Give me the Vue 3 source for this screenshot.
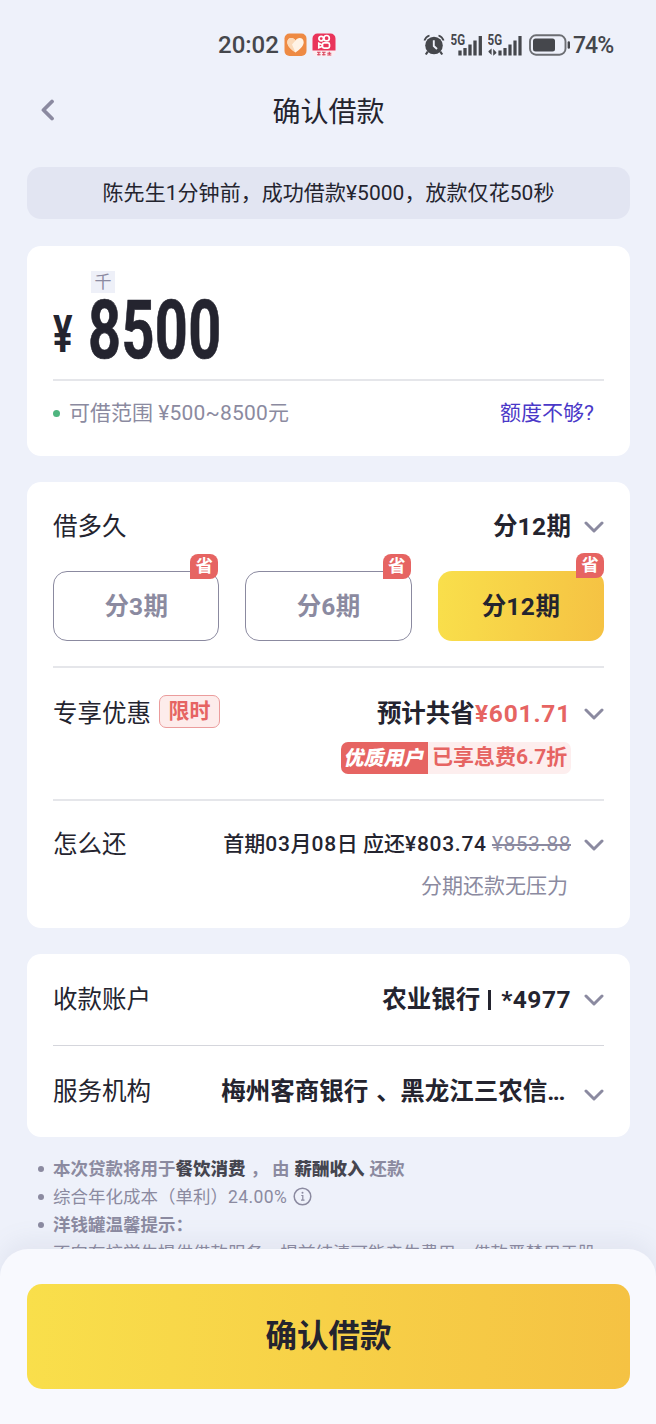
<script setup>
const terms = [
  { n: '3', active: false },
  { n: '6', active: false },
  { n: '12', active: true },
]
</script>

<template>
  <div class="page">
    <div class="status">
      <div class="status-left">
        <span class="clock">20:02</span>
        <svg class="app-ico" width="23" height="24" viewBox="0 0 23 24">
          <rect x="0.5" y="0.5" width="22" height="22.5" rx="5" fill="#ee8a43" />
          <path d="M11.5 19.5C8 17 3.3 13.500 3.300 9.300C3.300 6.500 5.200 5 7.300 5C9.200 5 10.600 6 11.500 7.400C12.400 6 13.800 5 15.700 5C17.800 5 19.700 6.500 19.700 9.300C19.700 13.500 15 17 11.500 19.500Z" fill="#fff3e6" />
          <path d="M11.500 7.400L8 11.500L11.500 19.500C8 17 3.300 13.500 3.300 9.300C3.300 6.500 5.200 5 7.300 5C9.200 5 10.600 6 11.500 7.400Z" fill="#fbd9b8" />
        </svg>
        <svg class="app-ico" width="24" height="24" viewBox="0 0 24 24">
          <rect x="0.500" y="0.500" width="23" height="23" rx="5" fill="#fbeef2" />
          <path d="M5.500 0.500H18.500A5 5 0 0 1 23.500 5.500V17.500H0.500V5.500A5 5 0 0 1 5.500 0.500Z" fill="#e9345a" />
          <g fill="none" stroke="#fff" stroke-width="1.700">
            <circle cx="9.200" cy="5.600" r="2.300" />
            <circle cx="14.600" cy="5.200" r="2.700" />
            <rect x="10.500" y="9.800" width="7" height="5.400" rx="1.600" />
            <path d="M10.500 12L6.800 10.300V14.800L10.500 13.200" />
          </g>
          <path d="M5 19.200h3.600M5 21.800h3.600M6.800 19v3.500M10 19.200h3.600M10 21.800h3.600M11.800 19v3.500M15.300 20.200h4M15.300 22h4M17.300 18.800v3.500" stroke="#d8435a" stroke-width="1.100" />
        </svg>
      </div>
      <div class="status-right">
        <svg width="22" height="22" viewBox="0 0 22 22">
          <circle cx="11" cy="11.500" r="8.800" fill="#45474c" />
          <path d="M1.400 6.500A8 8 0 0 1 6.500 1.500M15.500 1.500A8 8 0 0 1 20.600 6.500" fill="none" stroke="#45474c" stroke-width="1.800" />
          <path d="M4.800 17.500L2.800 20.500M17.200 17.500L19.200 20.500" stroke="#45474c" stroke-width="2.200" />
          <path d="M10.800 6.300V12L14 15" fill="none" stroke="#eef1fa" stroke-width="1.900" />
        </svg>
        <svg class="sig" width="32" height="24" viewBox="0 0 32 24">
          <text class="g5" x="-0.500" y="12" textLength="14.500" lengthAdjust="spacingAndGlyphs">5G</text>
          <path d="M9 17.500V22.500M14 15V22.500M19 11.500V22.500M24 7.500V22.500M29.300 3V22.500" stroke="#45474c" stroke-width="3.300" stroke-linecap="butt" />
        </svg>
        <svg class="sig2" width="34" height="24" viewBox="0 0 34 24">
          <text class="g5" x="-0.500" y="12" textLength="14.500" lengthAdjust="spacingAndGlyphs">5G</text>
          <path d="M12 17.500V22.500M17 15V22.500M22 11.500V22.500M27 7.500V22.500M32 3V22.500" stroke="#45474c" stroke-width="3.200" />
          <path d="M0 18.500H3.600V15.500M8.800 19.700H5.200V22.700M3.600 22V15.800L0.500 19M5.200 16V22.400L8.400 19.200" fill="#45474c" />
        </svg>
        <svg class="bat" width="42" height="22" viewBox="0 0 42 22">
          <rect x="1" y="1.300" width="35.500" height="19.400" rx="6" fill="none" stroke="#6c6e73" stroke-width="1.900" />
          <rect x="4" y="4.500" width="22" height="13" rx="2.500" fill="#45474c" />
          <path d="M39.800 8.500V13.500" stroke="#45474c" stroke-width="2.400" stroke-linecap="round" />
        </svg>
        <span class="pct">74%</span>
      </div>
    </div>

    <header class="nav">
      <svg class="back" width="16" height="22" viewBox="0 0 16 22">
        <path d="M12 2.500L3.500 11L12 19.500" fill="none" stroke="#8b8aa0" stroke-width="3.800" stroke-linejoin="round" stroke-linecap="round" />
      </svg>
      <h1>确认借款</h1>
    </header>

    <div class="notice"><span>陈先生1分钟前，成功借款¥5000，放款仅花50秒</span></div>

    <section class="card amount">
      <div class="unit">千</div>
      <div class="figure">
        <span class="yen"><i>¥</i></span>
        <span class="big"><i>8500</i></span>
      </div>
      <hr />
      <div class="range">
        <span class="dot"></span>
        <span class="range-text">可借范围 <b>¥500~8500</b>元</span>
        <a class="more">额度不够?</a>
      </div>
    </section>

    <section class="card plan">
      <div class="row r-term">
        <span class="label">借多久</span>
        <span class="value">分<b>12</b>期</span>
        <svg class="chev" viewBox="0 0 20 12"><path d="M2 2L10 10L18 2" /></svg>
      </div>
      <div class="terms">
        <div v-for="t in terms" :key="t.n" class="term" :class="{ active: t.active }">
          <span>分<b>{{ t.n }}</b>期</span>
          <em>省</em>
        </div>
      </div>
      <hr />
      <div class="row r-save">
        <span class="label">专享优惠</span>
        <span class="limited">限时</span>
        <span class="value">预计共省<b class="red">¥601.71</b></span>
        <svg class="chev" viewBox="0 0 20 12"><path d="M2 2L10 10L18 2" /></svg>
      </div>
      <div class="vip">
        <span class="vip-tag"><i>优质用户</i></span>
        <span class="vip-text">已享息费6.7折</span>
      </div>
      <hr />
      <div class="row r-repay">
        <span class="label">怎么还</span>
        <span class="value small"><span>首期<b>03</b>月<b>08</b>日 应还<b>¥803.74</b></span> <s>¥853.88</s></span>
        <svg class="chev" viewBox="0 0 20 12"><path d="M2 2L10 10L18 2" /></svg>
      </div>
      <div class="hint">分期还款无压力</div>
    </section>

    <section class="card account">
      <div class="row r-acc">
        <span class="label">收款账户</span>
        <span class="value">农业银行<span class="bar"></span><b>*4977</b></span>
        <svg class="chev" viewBox="0 0 20 12"><path d="M2 2L10 10L18 2" /></svg>
      </div>
      <hr />
      <div class="row r-org">
        <span class="label">服务机构</span>
        <span class="value org">梅州客商银行<span class="sep">、</span>黑龙江三农信<span class="dots">...</span></span>
        <svg class="chev low" viewBox="0 0 20 12"><path d="M2 2L10 10L18 2" /></svg>
      </div>
    </section>

    <ul class="notes">
      <li class="strong">本次贷款将用于<b>餐饮消费</b><span class="comma">，</span><span class="by">由</span><b>薪酬收入</b><span class="ret">还款</span></li>
      <li>综合年化成本（单利）<span class="rate">24.00%</span>
        <svg class="info" width="19" height="19" viewBox="0 0 19 19">
          <circle cx="9.500" cy="9.500" r="8.300" fill="none" stroke="#8b8aa0" stroke-width="1.500" />
          <path d="M8.300 8.500H9.800V13M8 13.200H11.500" fill="none" stroke="#8b8aa0" stroke-width="1.200" />
          <circle cx="9.500" cy="5.700" r="1" fill="#8b8aa0" />
        </svg>
      </li>
      <li class="strong">洋钱罐温馨提示：</li>
      <li class="plain">不向在校学生提供借款服务，提前结清可能产生费用，借款严禁用于股</li>
    </ul>

    <footer class="footer">
      <button class="submit">确认借款</button>
    </footer>
  </div>
</template>

<style>
body {
  margin: 0;
}
</style>

<style scoped>
.page {
  position: relative;
  width: 656px;
  height: 1424px;
  overflow: hidden;
  box-sizing: border-box;
  padding: 0 26px 0 27px;
  background: #eef1fa;
  color: #24242f;
  font-family: Roboto, "Noto Sans CJK SC", sans-serif;
  font-size: 21px;
}
.page * {
  box-sizing: border-box;
}
.status {
  display: flex;
  height: 88px;
  align-items: center;
  padding: 1px 0 0 191px;
}
.status-left {
  display: flex;
  align-items: center;
  width: 205px;
}
.clock {
  width: 66px;
  padding-top: 1px;
  font: 500 24px/30px Roboto, sans-serif;
  color: #45474c;
  white-space: nowrap;
}
.app-ico {
  flex: none;
  margin-right: 5px;
}
.status-right {
  display: flex;
  align-items: center;
  color: #45474c;
}
.g5 {
  font: 700 14px Roboto, sans-serif;
  fill: #45474c;
}
.sig {
  margin-left: 6px;
}
.sig2 {
  margin-left: 5px;
}
.bat {
  margin-left: 7px;
}
.pct {
  margin-left: 2px;
  padding-top: 2px;
  font: 500 23px/30px Roboto, sans-serif;
  letter-spacing: -1px;
}
.nav {
  display: grid;
  grid-template-columns: 40px 1fr 40px;
  align-items: center;
  height: 44px;
}
.back {
  margin-left: 12.500px;
}
.nav h1 {
  margin: 0;
  height: 44px;
  font-size: 28px;
  line-height: 50px;
  font-weight: 400;
  text-align: center;
}
.notice {
  display: flex;
  justify-content: center;
  margin-top: 35px;
  height: 52px;
  line-height: 52px;
  border-radius: 14px;
  background: #e2e5f2;
  font-size: 21px;
  letter-spacing: 0.050px;
  white-space: nowrap;
}
.card {
  border-radius: 14px;
  background: #fff;
  padding: 0 26px;
}
hr {
  margin: 0;
  border: 0;
  height: 2px;
  background: #e5e6ea;
}
.amount {
  margin-top: 27px;
  height: 210px;
  padding-top: 25px;
}
.unit {
  width: 24px;
  height: 22px;
  margin-left: 38px;
  background: #eef0f8;
  color: #8b8aa0;
  font-size: 17px;
  line-height: 22px;
  text-align: center;
}
.figure {
  display: flex;
  height: 86px;
}
.figure i {
  display: block;
  font-style: normal;
  transform-origin: 0 0;
  white-space: nowrap;
}
.yen {
  width: 35px;
}
.yen i {
  font-size: 52px;
  font-weight: 700;
  line-height: 84px;
  transform: scaleX(0.700);
}
.big i {
  font-size: 82px;
  font-weight: 700;
  line-height: 75px;
  letter-spacing: 0.500px;
  transform: scaleX(0.702);
  -webkit-text-stroke: 0.700px #24242f;
}
.range {
  display: flex;
  align-items: center;
  height: 64px;
  color: #8b8aa0;
}
.range b {
  font-weight: 400;
  letter-spacing: 0.200px;
}
.dot {
  width: 7px;
  height: 7px;
  border-radius: 50%;
  background: #4fb57f;
}
.range-text {
  margin-left: 9px;
  padding-bottom: 4px;
}
.more {
  margin-left: auto;
  margin-right: 10px;
  padding-bottom: 4px;
  color: #4a38c8;
}
.plan {
  margin-top: 26px;
  height: 446px;
}
.row {
  display: flex;
  align-items: center;
  white-space: nowrap;
}
.label {
  padding-bottom: 5px;
  font-size: 24.500px;
}
.value {
  margin-left: auto;
  padding-bottom: 5px;
  font-size: 24.500px;
  font-weight: 700;
}
.value b,
.term b {
  font-weight: inherit;
  letter-spacing: 0.500px;
}
.chev {
  flex: none;
  width: 20px;
  height: 12px;
  margin-left: 13px;
}
.chev path {
  fill: none;
  stroke: #8b8aa0;
  stroke-width: 3;
  stroke-linecap: round;
  stroke-linejoin: round;
}
.low {
  margin-top: 5px;
}
.r-term {
  height: 89px;
}
.terms {
  display: grid;
  grid-template-columns: repeat(3, 1fr);
  gap: 26px;
  height: 70px;
  margin-bottom: 25px;
}
.term {
  position: relative;
  display: flex;
  align-items: center;
  justify-content: center;
  height: 70px;
  padding-bottom: 3px;
  border: 1.500px solid #8b8aa0;
  border-radius: 14px;
  color: #8b8aa0;
  font-size: 24.500px;
  font-weight: 700;
}
.active {
  border: 0;
  background: linear-gradient(95deg, #f9df4b, #f5c243);
  color: #24242f;
}
.term em {
  position: absolute;
  right: 0;
  top: -18px;
  width: 28px;
  height: 25px;
  border-radius: 8px 8px 8px 0;
  background: #e66462;
  color: #fff;
  font-size: 17.500px;
  font-style: normal;
  line-height: 25px;
  text-align: center;
}
.r-save {
  height: 74px;
  padding-top: 17px;
}
.limited {
  width: 61px;
  height: 33px;
  margin: 0 0 4px 8px;
  border: 1px solid #eb9c9c;
  border-radius: 7px;
  background: #fdeceb;
  color: #e66462;
  font-size: 21px;
  font-weight: 700;
  line-height: 30px;
  text-align: center;
}
.value .red {
  color: #e66462;
  letter-spacing: 0.800px;
}
.vip {
  display: flex;
  justify-content: flex-end;
  margin-right: 33px;
  height: 57px;
}
.vip span {
  height: 32px;
  white-space: nowrap;
}
.vip-tag {
  width: 87px;
  border-radius: 7px 0 0 7px;
  background: #e66462;
  color: #fff;
  font-size: 20px;
  font-weight: 900;
  line-height: 33px;
  text-align: center;
}
.vip-tag i {
  display: inline-block;
  font-style: normal;
  transform: skewX(-12deg);
}
.vip-text {
  width: 143px;
  padding-left: 4px;
  border-radius: 0 7px 7px 0;
  background: #fdeeee;
  color: #e66462;
  font-weight: 700;
  font-size: 21px;
  line-height: 31px;
}
.r-repay {
  height: 87px;
}
.small {
  font-size: 21px;
  font-weight: 500;
}
.small b {
  letter-spacing: 0.700px;
}
.small s {
  color: #8b8aa0;
  font-weight: 400;
  letter-spacing: 0.500px;
}
.hint {
  margin-top: -17px;
  padding-right: 36px;
  color: #8b8aa0;
  line-height: 30px;
  text-align: right;
}
.account {
  margin-top: 26px;
  height: 183px;
}
.r-acc {
  height: 91px;
}
.r-org {
  height: 92px;
}
.account hr {
  height: 1px;
  background: #d5d6dc;
}
.bar {
  display: inline-block;
  width: 3px;
  height: 20px;
  margin: 0 10px 0 8px;
  background: #24242f;
  vertical-align: -2px;
}
.org {
  margin-right: 7px;
}
.sep {
  display: inline-block;
  width: 32px;
  padding-left: 8px;
}
.dots {
  letter-spacing: -1.500px;
}
.notes {
  margin: 18px 0 0;
  padding: 0 0 0 26px;
  list-style: none;
  color: #8b8aa0;
  font-size: 17.500px;
  line-height: 28px;
}
.notes li {
  position: relative;
  height: 28px;
  white-space: nowrap;
}
.notes li::before {
  content: "";
  position: absolute;
  left: -15px;
  top: 11px;
  width: 6px;
  height: 6px;
  border-radius: 50%;
  background: #8b8aa0;
}
.notes .plain::before {
  display: none;
}
.strong {
  font-weight: 700;
}
.strong b {
  color: #45454f;
}
.comma {
  margin-left: 5px;
}
.by {
  margin: 0 5px 0 4px;
}
.ret {
  margin-left: 5px;
}
.rate {
  letter-spacing: 0.400px;
}
.info {
  margin-left: 6px;
  vertical-align: -3px;
}
.footer {
  position: absolute;
  left: 0;
  right: 0;
  bottom: 0;
  height: 175px;
  padding: 35px 26px 0 27px;
  border-radius: 28px 28px 0 0;
  background: #f8f9fe;
  box-shadow: 0 -8px 24px rgba(120, 125, 160, 0.100);
}
.submit {
  display: block;
  width: 100%;
  height: 105px;
  padding: 0 0 6px;
  border: 0;
  border-radius: 15px;
  background: linear-gradient(93deg, #f9df4b, #f5c243);
  color: #24242f;
  font: 700 31.500px/99px "Noto Sans CJK SC", sans-serif;
}
</style>
